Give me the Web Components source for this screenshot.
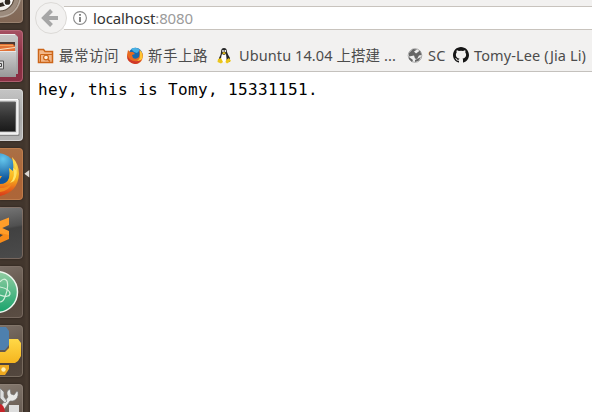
<!DOCTYPE html>
<html lang="zh"><head><meta charset="utf-8"><title>localhost:8080</title>
<style>html,body{margin:0;height:100%;overflow:hidden;background:#fff}</style></head>
<body>
<desktop-view></desktop-view>
<script>
const define = (name, html, init) => customElements.define(name, class extends HTMLElement {
  connectedCallback() {
    if (this.shadowRoot) return;
    const t = document.createElement('template');
    t.innerHTML = html;
    this.attachShadow({mode: 'open'}).append(t.content.cloneNode(true));
    if (init) init(this, this.shadowRoot);
  }
});

/* single-line label whose tracking is adjusted to a given width */
define('fit-text', `<style>:host{display:block;white-space:nowrap}span{display:inline-block}</style><span><slot></slot></span>`, (el, root) => {
  const span = root.querySelector('span');
  const w = +el.getAttribute('width'), n = el.textContent.length;
  el.style.width = w + 'px';
  span.style.letterSpacing = ((w - span.getBoundingClientRect().width) / n) + 'px';
});

define('launcher-tile', `<style>
:host{display:block;position:relative;flex:none;width:23px;height:52px;box-sizing:border-box;border-radius:0 4px 4px 0;overflow:hidden;background:var(--tile,#5b5049);box-shadow:0 0 2px #241c16}
:host::after{content:"";position:absolute;inset:0 0 0 -4px;border:1px solid var(--edge,#8b7d72);border-radius:4px;opacity:.7}
::slotted(svg){display:block;width:23px;height:52px}
</style><slot></slot>`);

define('app-launcher', `<style>
:host{display:block;position:relative;width:30px;height:412px;overflow:hidden;background:linear-gradient(90deg,#42362d 0 24px,#493c32 27px,#362b24 30px)}
.col{display:flex;flex-direction:column;gap:7px;margin-top:-29px}
.arrow{position:absolute;left:24px;top:169px}
</style>
<div class="col">
<launcher-tile style="--tile:linear-gradient(#88786c,#826755);--edge:#a28d7b"><svg viewBox="0 0 23 52"><circle cx="-2" cy="25" r="21" fill="#9c8b7d"/><path d="M0 46Q16 45 20 29" fill="none" stroke="#b9aca0" stroke-width="1.5"/><circle cx="0" cy="26" r="14" fill="#f3efeb" stroke="#5d4d40" stroke-width="1.2"/><circle cx="0" cy="26" r="8" fill="none" stroke="#302821" stroke-width="4"/><circle cx="7.5" cy="31" r="3.6" fill="#302821" stroke="#fff" stroke-width="1.5"/></svg></launcher-tile>
<launcher-tile style="--tile:linear-gradient(#a65264,#8c2b3f 55%,#8a3145);--edge:#bd7381"><svg viewBox="0 0 23 52"><defs><linearGradient id="f" x2="0" y2="1"><stop stop-color="#cfcfcf"/><stop offset="1" stop-color="#989898"/></linearGradient><linearGradient id="g" x2="0" y2="1"><stop stop-color="#c9c9c9"/><stop offset="1" stop-color="#a0a0a0"/></linearGradient></defs><path d="M0 4H15L18 7V44H0Z" fill="url(#g)"/><path d="M0 4.5H15" stroke="#efefef"/><path d="M0 12H15V22H0Z" fill="#4b3a35"/><path d="M0 14H13L15 16V22H0Z" fill="#e17136"/><path d="M0 15.5H13" stroke="#f6a55c"/><path d="M0 19.5L15 17.5" stroke="#f7e3c4" stroke-width="1.2"/><path d="M0 21H16V47H0Z" fill="url(#f)"/><path d="M0 21.5H16" stroke="#e8e8e8"/><path d="M-2 31H3.5V39H-2" fill="#ddd" stroke="#555"/><path d="M-1 33.5H1.5V36.5H-1" fill="none" stroke="#444"/></svg></launcher-tile>
<launcher-tile style="--tile:linear-gradient(#c5c5c5,#a9a9a9 55%,#b4b4b4);--edge:#ddd"><svg viewBox="0 0 23 52"><defs><linearGradient id="t" x2="0" y2="1"><stop stop-color="#555"/><stop offset=".5" stop-color="#333"/><stop offset="1" stop-color="#191919"/></linearGradient></defs><path d="M0 10.5H19V46.5H0" fill="#bbb" stroke="#858585"/><path d="M0 10.5H18V45H0" fill="#e2e2e2" stroke="#fff"/><path d="M0 13H15.5V42.5H0" fill="url(#t)" stroke="#666"/></svg></launcher-tile>
<launcher-tile style="--tile:linear-gradient(#aa7046,#ad6537 60%,#ad6639);--edge:#c68453"><svg viewBox="0 0 23 52"><defs><linearGradient id="x" x2="0" y2="1"><stop stop-color="#ffe45b"/><stop offset=".55" stop-color="#f9b41b"/><stop offset=".8" stop-color="#e86a1c"/><stop offset="1" stop-color="#d93a17"/></linearGradient><radialGradient id="b" cx=".65" cy=".15"><stop stop-color="#65c7ed"/><stop offset="1" stop-color="#11579c"/></radialGradient></defs><circle cx="-3" cy="25" r="20" fill="url(#b)"/><path d="M12 9Q19 16 19 26Q18 44 0 48V36Q7 36 9 30 10 25 9 20L13 23Q14 17 12 9Z" fill="url(#x)"/><path d="M15 13L16 22 13 20Q16 29 10 35L14 33Q19 26 15 13Z" fill="#ffe66b"/><path d="M0 40Q8 40 13 34 9 43 0 44Z" fill="#f08a1f"/><path d="M-2 28H2L0 31H-2" fill="#f6a12d"/></svg></launcher-tile>
<launcher-tile style="--tile:linear-gradient(170deg,#777 0,#505050 38%,#414141 42%,#4b4b4b);--edge:#8a7466"><svg viewBox="0 0 23 52"><path d="M0 14L9 10.5V18L0 22Z" fill="#ff9d29"/><path d="M0 22L9 25V32L0 36V30L3 28 0 27Z" fill="#f78b19"/><path d="M0 20L9 24V28L0 26Z" fill="#ff9d29"/></svg></launcher-tile>
<launcher-tile style="--tile:linear-gradient(160deg,#7b6f66,#65584e 45%,#54473e 60%,#5b4e44);--edge:#817469"><svg viewBox="0 0 23 52"><defs><linearGradient id="a" x2="0" y2="1"><stop stop-color="#93cea3"/><stop offset="1" stop-color="#18a36c"/></linearGradient></defs><circle cx="-3" cy="26" r="20.5" fill="url(#a)" stroke="#eef7ef" stroke-width="1.5"/><g fill="none" stroke="#d5f0dc" stroke-width="1.2"><path d="M0 16Q4 11 7 15 9 21 5 31 3 36 0 36"/><path d="M0 21Q10 23 10 28 9 32 0 29"/></g></svg></launcher-tile>
<launcher-tile style="--tile:linear-gradient(160deg,#7b6f66,#65584e 45%,#4e4239 60%,#54483f);--edge:#887a6e"><svg viewBox="0 0 23 52"><defs><linearGradient id="p" x2="0" y2="1"><stop stop-color="#ffd947"/><stop offset="1" stop-color="#f5b51f"/></linearGradient></defs><path d="M9 14H18L21 18V31L18 36 15 38H0V27H5L9 23Z" fill="url(#p)"/><path d="M0 2H6L9 6V20L5 25H0Z" fill="#4e80ae"/><path d="M0 40H9V44L5 50H0Z" fill="#eda820"/><circle cx="3.5" cy="44.5" r="2.2" fill="#fff0b4"/></svg></launcher-tile>
<launcher-tile style="--tile:linear-gradient(160deg,#85796f,#6a5e55 55%,#554a42);--edge:#8e8177"><svg viewBox="0 0 23 52"><path d="M9 21H19V30H9Z" fill="#ddd"/><path d="M0 23L8 13Q5 7 10 5L11 10 14 11 17 7 18 8Q19 15 13 17L10 17 3 27 0 26Z" fill="#e8e8e6" stroke="#777" stroke-width=".7"/><path d="M0 4L4 8 4 13 7 17 5 19 0 14Z" fill="#ddd" stroke="#777" stroke-width=".7"/><path d="M0 20Q5 21 5 30H0Z" fill="#c52429"/></svg></launcher-tile>
</div>
<svg class="arrow" width="6" height="10" viewBox="0 0 6 10"><path d="M5.3 1V8.6L.4 4.8Z" fill="#ddd9d5"/></svg>`);

define('address-bar', `<style>
:host{display:grid;grid-template-columns:36px 1fr;height:38px;padding-left:4px;box-sizing:border-box;font:15px "Noto Sans","Open Sans",sans-serif}
.back{display:block;width:34px;height:36px;z-index:1;margin-top:1px}
.field{margin:6px 0 0 -6px;height:24px;box-sizing:border-box;border:solid #c8c3bd;border-width:1px 0;background:#fff;display:flex;align-items:center;padding-left:9px;gap:6px}
fit-text{color:#333;line-height:22px}
i{font-style:normal;color:#9b9b9b}
</style>
<svg class="back" viewBox="0 0 34 36"><circle cx="17" cy="17" r="15.5" fill="#f2f1f0" stroke="#dcdad7"/><path d="M17.5 9.5L10 17l7.5 7.5M11 17H24" fill="none" stroke="#a6a6a6" stroke-width="4"/></svg>
<div class="field"><svg width="14" height="14" viewBox="0 0 14 14"><circle cx="7" cy="7" r="6.4" fill="none" stroke="#8a8a8a" stroke-width="1.1"/><path d="M7 6V11M7 3V4.8" stroke="#777" stroke-width="1.8"/></svg><fit-text width="100">localhost<i>:8080</i></fit-text></div>`);

define('bookmark-item', `<style>
:host{display:flex;align-items:center;flex:none;height:24px}
.i{display:flex;flex:none}
</style><span class="i"><slot name="icon"></slot></span><slot></slot>`);

define('bookmarks-bar', `<style>
:host{display:flex;height:33px;padding:6px 0 0 7px;box-sizing:border-box;font:14.5px/22px "Noto Sans","Noto Sans CJK SC",sans-serif;color:#4c4c4c}
svg{display:block}fit-text{height:24px}
</style>
<bookmark-item style="width:89px"><svg slot="icon" width="22" height="18" viewBox="0 0 22 18"><path d="M1.5 4.5V2.5H6.5L8 4.5H15.5V15.5H1.5Z" fill="#f3b88a" stroke="#cc6518" stroke-width="1.5"/><path d="M3.5 15V7.5H15" fill="none" stroke="#cc6518"/><circle cx="9" cy="10.5" r="2.4" fill="#fff0df" stroke="#cc6518" stroke-width="1.2"/><path d="M10.8 12.2L13 14.5" stroke="#cc6518" stroke-width="1.6"/></svg><fit-text width="60">最常访问</fit-text></bookmark-item>
<bookmark-item style="width:89px"><svg slot="icon" width="22" height="18" viewBox="0 0 22 18"><circle cx="9.5" cy="8" r="7.2" fill="#1769ae"/><path d="M5 2Q10-1 14 3L11 6 8 5Z" fill="#48afe2"/><path d="M2 3L4 5 7 5 9 7 6 8 7 11Q10 13 13 10 14 7 13 3 17 5 17 9 16 17 9 17 1 16 1 8Z" fill="#e76a20"/><path d="M14 3Q18 7 16 12 13 16 9 15 14 13 14 9Z" fill="#ffc634"/><path d="M1 8Q1 16 9 17 13 17 15 13 5 17 1 8" fill="#cf3729"/></svg><fit-text width="60">新手上路</fit-text></bookmark-item>
<bookmark-item style="width:192px"><svg slot="icon" width="24" height="18" viewBox="-1 0 24 18"><path d="M5 5Q5 1 8 1T11 5Q12 8 14 11V15H3V11Q5 8 5 5" fill="#282828"/><path d="M6 7L8 8 10 7Q11 12 10 15H6Q4 12 6 7" fill="#fff"/><circle cx="7" cy="4" r=".9" fill="#fff"/><circle cx="9.3" cy="4" r=".9" fill="#fff"/><path d="M6 6L8 5 10 6 8 7.5ZM2 12L5 11 7 15 5 16.5 1.5 15ZM10 13L13 11 15 14 11 16.5 9.5 15Z" fill="#ebc51c"/></svg><fit-text width="157">Ubuntu 14.04 上搭建 ...</fit-text></bookmark-item>
<bookmark-item style="width:45px"><svg slot="icon" width="21" height="18" viewBox="0 0 21 18"><circle cx="8" cy="8.5" r="6.8" fill="#eee" stroke="#aaa"/><path d="M2 6L6 2 10 2.5 7 4.5 9 6.5 13 3.5 14.5 8 12 8.5 10 12 8 11.5 7 8.5 2 9.5ZM8 13L12 11 14 9.5 12 13.5 8 15ZM2 10L6 13 5 15 2 12Z" fill="#666"/></svg><fit-text width="17.5">SC</fit-text></bookmark-item>
<bookmark-item><svg slot="icon" width="22" height="18" viewBox="0 0 22 18"><path transform="translate(1 0)" d="M8 0C3.6 0 0 3.6 0 8c0 3.5 2.3 6.5 5.5 7.6.4.1.5-.2.5-.4v-1.5c-2.2.5-2.7-.9-2.7-.9-.4-.9-.9-1.2-.9-1.2-.7-.5.1-.5.1-.5.8.1 1.2.8 1.2.8.7 1.2 1.9.9 2.3.7.1-.5.3-.9.5-1.1-1.8-.2-3.6-.9-3.6-4 0-.9.3-1.6.8-2.1-.1-.2-.4-1 .1-2.1 0 0 .7-.2 2.2.8a7.5 7.5 0 0 1 4 0c1.5-1 2.2-.8 2.2-.8.4 1.1.2 1.9.1 2.1.5.6.8 1.3.8 2.1 0 3.1-1.9 3.8-3.6 4 .3.2.5.7.5 1.5v2.2c0 .2.1.5.5.4C13.7 14.5 16 11.5 16 8c0-4.4-3.6-8-8-8z" fill="#161616"/></svg><fit-text width="112">Tomy-Lee (Jia Li)</fit-text></bookmark-item>`);

define('page-content', `<style>
:host{display:block;border-top:1px solid #c4c1bd;background:#fff;flex:1;padding:8px;color:#000;font:16px/19px "DejaVu Sans Mono",monospace}
</style><fit-text width="280"><slot></slot></fit-text>`, (el, root) => {
  const span = root.querySelector('fit-text').shadowRoot.querySelector('span');
  span.style.letterSpacing = '0';
  span.style.letterSpacing = (280 - span.getBoundingClientRect().width) / el.textContent.length + 'px';
});

define('desktop-view', `<style>
:host{display:grid;grid-template-columns:30px 1fr;width:592px;height:412px;overflow:hidden}
main{display:flex;flex-direction:column;min-width:0;background:#f2f1f0;overflow:hidden}
</style><app-launcher></app-launcher><main><address-bar></address-bar><bookmarks-bar></bookmarks-bar><page-content>hey, this is Tomy, 15331151.</page-content></main>`);
</script>
</body></html>
